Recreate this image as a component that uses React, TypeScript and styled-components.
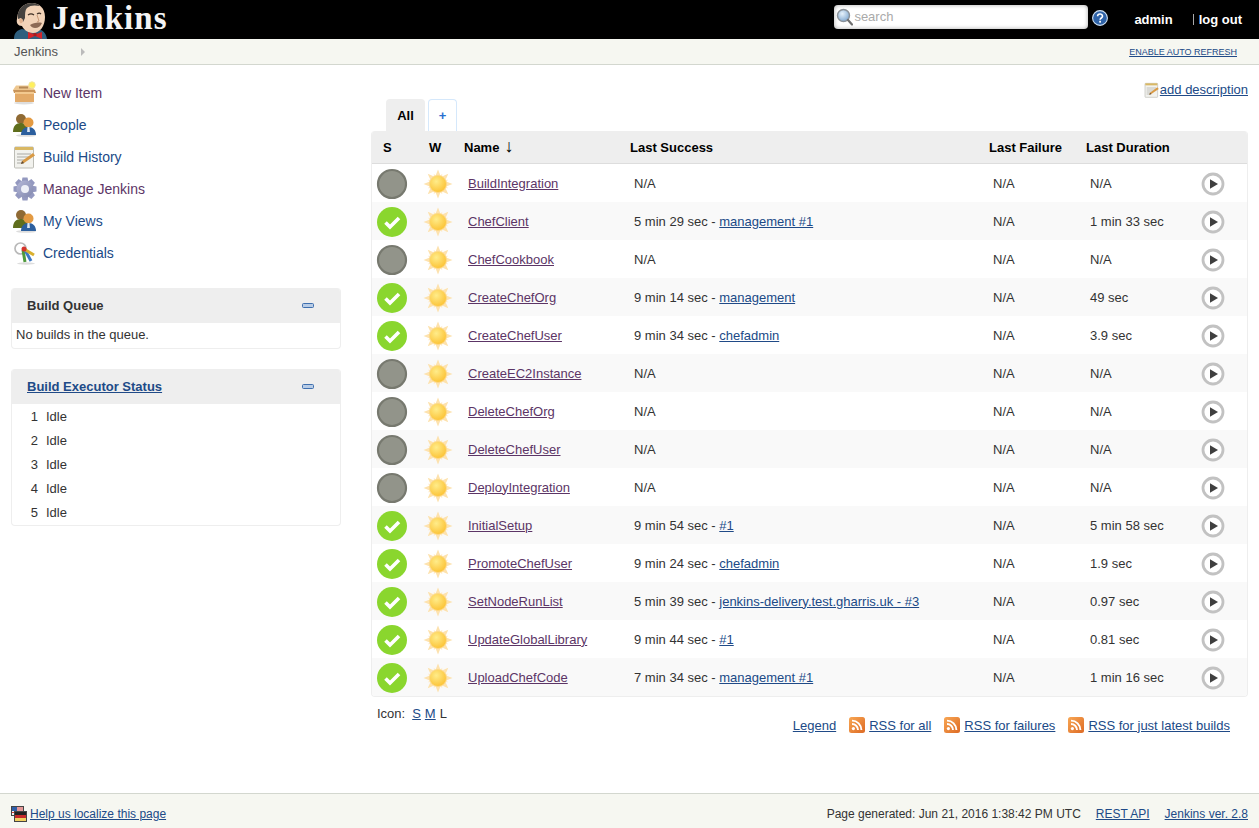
import React from "react";
import styled, { createGlobalStyle, css } from "styled-components";

const GlobalStyle = createGlobalStyle`
  html, body {
    margin: 0;
    padding: 0;
    background: #fff;
    color: #333;
    font-family: "Liberation Sans", Arial, sans-serif;
    font-size: 13px;
  }
  svg { display: block; flex: none; }
`;

const Page = styled.div`
  display: flex;
  flex-direction: column;
  height: 100vh;
  min-height: 828px;
  overflow: hidden;
`;

const linkStyles = css<{ $visited?: boolean }>`
  color: ${(p) => (p.$visited ? "#5c3566" : "#204a87")};
  text-decoration: underline;
`;

const Link = styled.a<{ $visited?: boolean }>`
  ${linkStyles};
`;

const Header = styled.header`
  display: flex;
  align-items: flex-start;
  height: 39px;
  background: #000;
  flex: none;
`;

const Brand = styled.div`
  display: flex;
  align-items: flex-start;
  gap: 5px;
  padding: 3px 0 0 14px;
  flex: 1;
`;

const BrandName = styled.span`
  font-family: "Liberation Serif", "Times New Roman", serif;
  font-size: 33px;
  font-weight: 700;
  line-height: 30px;
  letter-spacing: 1.05px;
  color: #f4f4f4;
`;

const SearchBox = styled.div`
  display: flex;
  align-items: center;
  gap: 1px;
  width: 254px;
  height: 24px;
  margin-top: 5px;
  padding: 0 0 1px 2px;
  box-sizing: border-box;
  background: #fff;
  border-radius: 4px;
  box-shadow: inset 0 0 4px rgba(0, 0, 0, 0.35);
  color: #aaa;
  font-size: 13px;
`;

const HelpButton = styled.div`
  margin: 10px 0 0 4px;
`;

const UserLink = styled.span`
  color: #fff;
  font-weight: 700;
  font-size: 13px;
  line-height: 39px;
  padding-left: 26px;
`;

const LogoutLink = styled.span`
  color: #fff;
  font-weight: 700;
  font-size: 13px;
  line-height: 39px;
  padding: 0 17px 0 26px;
  position: relative;

  &::before {
    content: "";
    position: absolute;
    left: 20px;
    top: 14px;
    width: 1px;
    height: 11px;
    background: #aaa;
  }
`;

const Breadcrumbs = styled.nav`
  display: flex;
  align-items: center;
  height: 25px;
  flex: none;
  padding: 0 22px 0 14px;
  background: #f6f7f1;
  border-bottom: 1px solid #d3d7cf;
  color: #555;
`;

const CrumbArrow = styled.span`
  width: 0;
  height: 0;
  margin-left: 23px;
  margin-right: auto;
  border-left: 4px solid #bbb;
  border-top: 4px solid transparent;
  border-bottom: 4px solid transparent;
`;

const AutoRefresh = styled.a`
  color: #204a87;
  font-size: 9px;
  text-transform: uppercase;
  text-decoration: underline;
`;

const Body = styled.div`
  display: grid;
  grid-template-columns: 330px 1fr;
  column-gap: 30px;
  flex: 1;
  padding: 0 11px;
`;

const Side = styled.aside`
  padding-top: 12px;
`;

const Tasks = styled.div`
  margin-bottom: 19px;
`;

const Task = styled.div`
  display: flex;
  align-items: center;
  gap: 6px;
  height: 32px;
  padding-left: 2px;
  font-size: 14px;
`;

const TaskLink = styled.a<{ $visited?: boolean }>`
  color: ${(p) => (p.$visited ? "#5c3566" : "#204a87")};
`;

const Pane = styled.section`
  margin-bottom: 20px;
  border: 1px solid #eee;
  border-top: none;
  border-radius: 4px;
  overflow: hidden;
`;

const PaneHead = styled.div`
  display: flex;
  align-items: center;
  justify-content: space-between;
  height: 35px;
  padding: 0 26px 0 15px;
  background: #eee;
  font-weight: 700;
  color: #333;
`;

const PaneText = styled.div`
  height: 25px;
  line-height: 24px;
  padding-left: 4px;
`;

const ExecutorList = styled.div`
  padding: 1px 0 0;
`;

const ExecutorRow = styled.div`
  display: grid;
  grid-template-columns: 34px 1fr;
  height: 24px;
  line-height: 24px;
`;

const ExecutorNum = styled.span`
  text-align: right;
  padding-right: 8px;
`;

const Main = styled.main`
  display: flex;
  flex-direction: column;
`;

const DescriptionRow = styled.div`
  display: flex;
  justify-content: flex-end;
  align-items: center;
  height: 19px;
  margin-top: 15px;
`;

const Tabs = styled.div`
  display: flex;
  gap: 3px;
  height: 32px;
  padding-left: 15px;
`;

const Tab = styled.div<{ $active?: boolean }>`
  display: flex;
  align-items: center;
  justify-content: center;
  box-sizing: border-box;
  border-radius: 4px 4px 0 0;
  font-weight: 700;
  ${(p) =>
    p.$active
      ? css`
          width: 39px;
          background: #eee;
          color: #000;
        `
      : css`
          width: 29px;
          border: 1px solid #d5e8fb;
          border-bottom: none;
          color: #2a6fd0;
        `}
`;

const Table = styled.table`
  width: 877px;
  table-layout: fixed;
  border-collapse: separate;
  border-spacing: 0;
  border: 1px solid #eee;
  border-top: none;
  border-radius: 4px;
  overflow: hidden;
`;

const HeadCell = styled.th<{ $inset?: number }>`
  height: 32px;
  padding: 0 0 0 ${(p) => p.$inset ?? 4}px;
  background: #eee;
  border-bottom: 1px solid #ddd;
  color: #000;
  font-size: 13px;
  text-align: left;
`;

const SortArrow = styled.span`
  font-weight: 400;
  font-size: 18px;
  line-height: 14px;
  margin-left: 5px;
`;

const Row = styled.tr`
  &:nth-child(even) td {
    background: #f9f9f9;
  }
`;

const Cell = styled.td<{ $icon?: number }>`
  height: 38px;
  padding: 0 0 0 ${(p) => p.$icon ?? 8}px;
  color: #333;

  svg {
    margin-top: 2px;
  }
`;

const Below = styled.div`
  display: flex;
  justify-content: space-between;
  padding-right: 18px;
`;

const IconSizes = styled.div`
  display: flex;
  gap: 4px;
  padding: 9px 0 0 6px;
  line-height: 15px;
`;

const IconLabel = styled.span`
  margin-right: 3px;
`;

const RssLinks = styled.div`
  display: flex;
  align-items: center;
  gap: 13px;
  padding-top: 20px;
`;

const RssLink = styled.div`
  display: flex;
  align-items: center;
  gap: 4px;
`;

const Footer = styled.footer`
  display: flex;
  align-items: center;
  justify-content: space-between;
  flex: none;
  box-sizing: border-box;
  height: 35px;
  padding: 6px 11px 0;
  background: #f6f7f1;
  border-top: 1px solid #d3d7cf;
  font-size: 12px;
`;

const FooterHelp = styled.div`
  display: flex;
  align-items: center;
  gap: 3px;
`;

const FooterRight = styled.div`
  display: flex;
  gap: 15px;
`;

function ButlerLogo() {
  return (
    <svg width="33" height="36" viewBox="0 0 33 36">
      <path d="M0 36c0-6 3-9 8-10l8 2 8-2c5 1 8 4 9 10z" fill="#2f5f7e" />
      <path d="M5 8C7 3 12 0 18 0c7 0 13 5 13 14 0 9-5 16-12 16-5 0-9-3-11-7-4 0-6-3-5-7 0-3 1-6 2-8z" fill="#f2d3b8" />
      <path d="M5 8C7 3 12 0 18 0c3 0 6 1 8 3-5-1-10-1-13 2-2 2-2 6-2 10l-2 4-2-4-3 1C3 12 4 10 5 8z" fill="#45423f" />
      <path d="M5 17c1-2 3-2 4 0 0 2-1 4-3 3z" fill="#e2b390" />
      <path d="M14 12c2-1.500 4-1.500 6 0M23 11c1.500-1 3-1 4 0" stroke="#3e2f25" strokeWidth="1.2" fill="none" />
      <path d="M23 12l2 6-2 1" stroke="#c99a78" strokeWidth="1" fill="none" />
      <path d="M16 22c3-2 8-3 12-2-1 3-4 5-7 5-2 0-4-1-5-3z" fill="#8d6a55" />
      <path d="M14 29l7 2.500 7-2.500v7l-7-3-7 3z" fill="#d3252a" />
      <rect x="19.500" y="30" width="3" height="3" fill="#a81b1f" />
    </svg>
  );
}

function SearchIcon() {
  return (
    <svg width="17" height="18" viewBox="0 0 17 18">
      <defs>
        <radialGradient id="lens" cx="0.4" cy="0.35" r="0.7">
          <stop offset="0" stopColor="#e6f2fb" />
          <stop offset="1" stopColor="#7ea6cf" />
        </radialGradient>
      </defs>
      <circle cx="7.5" cy="7.5" r="6" fill="url(#lens)" stroke="#8b9299" strokeWidth="1.4" />
      <path d="M12 12l4 4.5" stroke="#6f6f6f" strokeWidth="2.2" strokeLinecap="round" />
    </svg>
  );
}

function HelpIcon() {
  return (
    <svg width="16" height="16" viewBox="0 0 16 16">
      <circle cx="8" cy="8" r="7.4" fill="#2f63a8" stroke="#cfe0f2" strokeWidth="1.1" />
      <path d="M5.6 6.2c0-3 4.9-3 4.9 0 0 1.8-2.4 1.8-2.4 3.6" fill="none" stroke="#fff" strokeWidth="1.6" />
      <rect x="7.2" y="10.8" width="1.8" height="1.8" fill="#fff" />
    </svg>
  );
}

function NewItemIcon() {
  return (
    <svg width="24" height="24" viewBox="0 0 24 24">
      <ellipse cx="11" cy="22" rx="10" ry="1.5" fill="#ddd" />
      <path d="M0 9h22l1 3H1z" fill="#c99459" />
      <path d="M3 4.500h15l4 4.500H0z" fill="#eec790" />
      <rect x="6" y="5.500" width="9" height="2" fill="#b58a58" />
      <path d="M2 11h19v10H2z" fill="#e3aa68" />
      <path d="M2 11h19v2H2z" fill="#f3c98f" />
      <circle cx="19" cy="4" r="3.200" fill="#fff05c" stroke="#f0e6a0" />
    </svg>
  );
}

function PeopleIcon() {
  return (
    <svg width="24" height="24" viewBox="0 0 24 24">
      <ellipse cx="13" cy="22.500" rx="10" ry="1.300" fill="#ddd" />
      <circle cx="8" cy="6" r="5" fill="#8f6a34" />
      <path d="M0 19c0-6 3-9 8-9s8 3 8 9z" fill="#5f6e1d" />
      <circle cx="15.500" cy="9.500" r="5" fill="#e39a42" />
      <path d="M8 22c0-5 3-8 7.500-8s7.500 3 7.500 8z" fill="#2c5f9e" />
      <path d="M14.500 14h2l.4 5h-2.800z" fill="#dfe7f0" />
    </svg>
  );
}

function NotepadIcon({ size = 24 }: { size?: number }) {
  return (
    <svg width={size} height={size} viewBox="0 0 24 24">
      <rect x="1.500" y="2" width="19" height="21" rx="1" fill="#f2f2ee" stroke="#bdbdb6" />
      <rect x="2" y="2" width="18" height="3" fill="#d9b864" />
      <path d="M4 9h14M4 12h14M4 15h9M4 18h7" stroke="#a9a9a4" strokeWidth="1" />
      <path d="M8 19l1-3L20 8l2 2.400L11 18z" fill="#d99a45" />
      <path d="M8 19l1-3 2 2z" fill="#5a4a3a" />
    </svg>
  );
}

const gearTeeth = [0, 45, 90, 135, 180, 225, 270, 315];

function GearIcon() {
  return (
    <svg width="24" height="24" viewBox="0 0 24 24">
      <defs>
        <linearGradient id="gear" x1="0" y1="0" x2="1" y2="1">
          <stop offset="0" stopColor="#b4b8d8" />
          <stop offset="1" stopColor="#8187ad" />
        </linearGradient>
      </defs>
      {gearTeeth.map((a) => (
        <path key={a} d="M9.500 0.500h5l1 5h-7z" fill="#9499c0" transform={`rotate(${a} 12 12)`} />
      ))}
      <circle cx="12" cy="12" r="8.500" fill="url(#gear)" />
      <circle cx="12" cy="12" r="4" fill="#eef0f8" />
    </svg>
  );
}

function KeysIcon() {
  return (
    <svg width="24" height="24" viewBox="0 0 24 24">
      <ellipse cx="13" cy="22.500" rx="9" ry="1.200" fill="#ddd" />
      <circle cx="7.500" cy="7.500" r="5.500" fill="none" stroke="#b9b9b9" strokeWidth="1.700" />
      <path d="M10 9l2 12" stroke="#4f9a3c" strokeWidth="3" />
      <path d="M12 9l6 11" stroke="#3c78c4" strokeWidth="3" />
      <path d="M11 8l10 6" stroke="#d9b02f" strokeWidth="3" />
      <circle cx="11" cy="8" r="2.500" fill="#d4342c" />
    </svg>
  );
}

function RssIcon() {
  return (
    <svg width="16" height="16" viewBox="0 0 16 16">
      <defs>
        <linearGradient id="rss" x1="0" y1="0" x2="1" y2="1">
          <stop offset="0" stopColor="#f8a754" />
          <stop offset="1" stopColor="#dd6a24" />
        </linearGradient>
      </defs>
      <rect width="16" height="16" rx="2.500" fill="url(#rss)" />
      <circle cx="4.400" cy="11.600" r="1.600" fill="#fff" />
      <path d="M3 7a6 6 0 0 1 6 6M3 3.600A9.400 9.400 0 0 1 12.400 13" fill="none" stroke="#fff" strokeWidth="1.900" />
    </svg>
  );
}

function FlagsIcon() {
  return (
    <svg width="16" height="16" viewBox="0 0 16 16">
      <rect x="0.500" y="0.500" width="12" height="9" fill="#f4f4f4" stroke="#444" />
      <rect x="1" y="1" width="5" height="4" fill="#2f5ea8" />
      <path d="M6 2h6M6 4h6M1 6.500h11" stroke="#d23b3b" />
      <rect x="3.500" y="5.500" width="12" height="10" fill="#f0d060" stroke="#444" />
      <rect x="4" y="6" width="11" height="3" fill="#222" />
      <rect x="4" y="9" width="11" height="3" fill="#c62a2a" />
    </svg>
  );
}

function MinusIcon() {
  return (
    <svg width="12" height="5" viewBox="0 0 12 5">
      <rect x="0.500" y="0.500" width="11" height="4" rx="1" fill="#b8cce6" stroke="#3f6fae" />
    </svg>
  );
}

function StatusIcon({ ok }: { ok: boolean }) {
  if (!ok) {
    return (
      <svg width="32" height="32" viewBox="0 0 32 32">
        <circle cx="16" cy="16" r="14" fill="#92948a" stroke="#77796f" strokeWidth="2.200" />
      </svg>
    );
  }
  return (
    <svg width="32" height="32" viewBox="0 0 32 32">
      <circle cx="16" cy="16" r="15" fill="#8ad62e" />
      <path d="M9.500 16.500l4.500 4.500 9-9" fill="none" stroke="#fff" strokeWidth="3.600" />
    </svg>
  );
}

const sunRays = [0, 45, 90, 135, 180, 225, 270, 315];

function SunIcon() {
  return (
    <svg width="30" height="30" viewBox="0 0 30 30">
      <defs>
        <radialGradient id="sun" cx="0.4" cy="0.35" r="0.75">
          <stop offset="0" stopColor="#ffec8a" />
          <stop offset="1" stopColor="#fbbd2a" />
        </radialGradient>
      </defs>
      {sunRays.map((a) => (
        <path key={a} d="M15 0.500l2.800 7h-5.600z" fill="#fde2ae" transform={`rotate(${a} 15 15)`} />
      ))}
      {sunRays.map((a) => (
        <path key={a} d="M15 4l2.200 5h-4.400z" fill="#feeccb" transform={`rotate(${a + 22.5} 15 15)`} />
      ))}
      <circle cx="15" cy="15" r="8.500" fill="url(#sun)" stroke="#fcd888" strokeWidth="0.800" />
    </svg>
  );
}

function PlayIcon() {
  return (
    <svg width="24" height="24" viewBox="0 0 24 24">
      <circle cx="12" cy="12" r="10" fill="#fff" stroke="#c2c2c2" strokeWidth="2.800" />
      <path d="M9 7.300l8 4.700-8 4.700z" fill="#3f3f3f" />
    </svg>
  );
}

interface Job {
  name: string;
  ago?: string;
  build?: string;
  duration?: string;
}

const jobs: Job[] = [
  { name: "BuildIntegration" },
  { name: "ChefClient", ago: "5 min 29 sec", build: "management #1", duration: "1 min 33 sec" },
  { name: "ChefCookbook" },
  { name: "CreateChefOrg", ago: "9 min 14 sec", build: "management", duration: "49 sec" },
  { name: "CreateChefUser", ago: "9 min 34 sec", build: "chefadmin", duration: "3.9 sec" },
  { name: "CreateEC2Instance" },
  { name: "DeleteChefOrg" },
  { name: "DeleteChefUser" },
  { name: "DeployIntegration" },
  { name: "InitialSetup", ago: "9 min 54 sec", build: "#1", duration: "5 min 58 sec" },
  { name: "PromoteChefUser", ago: "9 min 24 sec", build: "chefadmin", duration: "1.9 sec" },
  { name: "SetNodeRunList", ago: "5 min 39 sec", build: "jenkins-delivery.test.gharris.uk - #3", duration: "0.97 sec" },
  { name: "UpdateGlobalLibrary", ago: "9 min 44 sec", build: "#1", duration: "0.81 sec" },
  { name: "UploadChefCode", ago: "7 min 34 sec", build: "management #1", duration: "1 min 16 sec" },
];

const tasks = [
  { label: "New Item", icon: <NewItemIcon />, visited: true },
  { label: "People", icon: <PeopleIcon /> },
  { label: "Build History", icon: <NotepadIcon /> },
  { label: "Manage Jenkins", icon: <GearIcon />, visited: true },
  { label: "My Views", icon: <PeopleIcon /> },
  { label: "Credentials", icon: <KeysIcon /> },
];

export default function App() {
  return (
    <Page>
      <GlobalStyle />
      <Header>
        <Brand>
          <ButlerLogo />
          <BrandName>Jenkins</BrandName>
        </Brand>
        <SearchBox>
          <SearchIcon />
          search
        </SearchBox>
        <HelpButton>
          <HelpIcon />
        </HelpButton>
        <UserLink>admin</UserLink>
        <LogoutLink>log out</LogoutLink>
      </Header>
      <Breadcrumbs>
        Jenkins
        <CrumbArrow />
        <AutoRefresh>Enable auto refresh</AutoRefresh>
      </Breadcrumbs>
      <Body>
        <Side>
          <Tasks>
            {tasks.map((t) => (
              <Task key={t.label}>
                {t.icon}
                <TaskLink $visited={t.visited}>{t.label}</TaskLink>
              </Task>
            ))}
          </Tasks>
          <Pane>
            <PaneHead>
              Build Queue
              <MinusIcon />
            </PaneHead>
            <PaneText>No builds in the queue.</PaneText>
          </Pane>
          <Pane>
            <PaneHead>
              <Link>Build Executor Status</Link>
              <MinusIcon />
            </PaneHead>
            <ExecutorList>
              {[1, 2, 3, 4, 5].map((n) => (
                <ExecutorRow key={n}>
                  <ExecutorNum>{n}</ExecutorNum>
                  <span>Idle</span>
                </ExecutorRow>
              ))}
            </ExecutorList>
          </Pane>
        </Side>
        <Main>
          <DescriptionRow>
            <NotepadIcon size={16} />
            <Link>add description</Link>
          </DescriptionRow>
          <Tabs>
            <Tab $active>All</Tab>
            <Tab>+</Tab>
          </Tabs>
          <Table>
            <colgroup>
              <col width="45" />
              <col width="43" />
              <col width="166" />
              <col width="359" />
              <col width="97" />
              <col width="110" />
              <col />
            </colgroup>
            <thead>
              <tr>
                <HeadCell $inset={11}>S</HeadCell>
                <HeadCell $inset={12}>W</HeadCell>
                <HeadCell>
                  Name<SortArrow>↓</SortArrow>
                </HeadCell>
                <HeadCell>Last Success</HeadCell>
                <HeadCell>Last Failure</HeadCell>
                <HeadCell>Last Duration</HeadCell>
                <HeadCell />
              </tr>
            </thead>
            <tbody>
              {jobs.map((job) => (
                <Row key={job.name}>
                  <Cell $icon={4}>
                    <StatusIcon ok={!!job.ago} />
                  </Cell>
                  <Cell $icon={6}>
                    <SunIcon />
                  </Cell>
                  <Cell>
                    <Link $visited>{job.name}</Link>
                  </Cell>
                  <Cell>
                    {job.ago ? (
                      <>
                        {job.ago} - <Link>{job.build}</Link>
                      </>
                    ) : (
                      "N/A"
                    )}
                  </Cell>
                  <Cell>N/A</Cell>
                  <Cell>{job.duration ?? "N/A"}</Cell>
                  <Cell $icon={9}>
                    <PlayIcon />
                  </Cell>
                </Row>
              ))}
            </tbody>
          </Table>
          <Below>
            <IconSizes>
              <IconLabel>Icon:</IconLabel>
              <Link>S</Link>
              <Link>M</Link>
              <span>L</span>
            </IconSizes>
            <RssLinks>
              <Link>Legend</Link>
              <RssLink>
                <RssIcon />
                <Link>RSS for all</Link>
              </RssLink>
              <RssLink>
                <RssIcon />
                <Link>RSS for failures</Link>
              </RssLink>
              <RssLink>
                <RssIcon />
                <Link>RSS for just latest builds</Link>
              </RssLink>
            </RssLinks>
          </Below>
        </Main>
      </Body>
      <Footer>
        <FooterHelp>
          <FlagsIcon />
          <Link>Help us localize this page</Link>
        </FooterHelp>
        <FooterRight>
          <span>Page generated: Jun 21, 2016 1:38:42 PM UTC</span>
          <Link>REST API</Link>
          <Link>Jenkins ver. 2.8</Link>
        </FooterRight>
      </Footer>
    </Page>
  );
}
